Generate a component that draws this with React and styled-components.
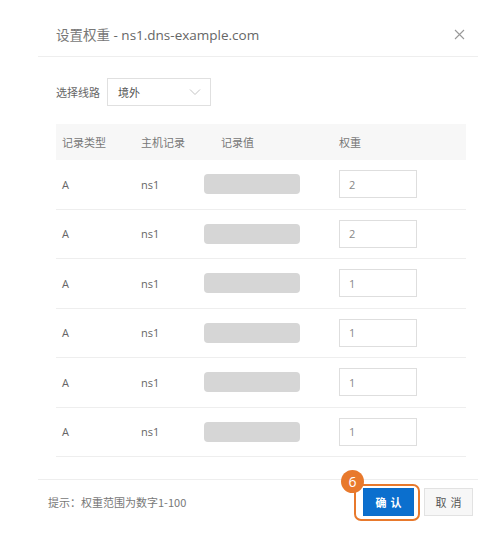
import React from "react";
import styled, { createGlobalStyle } from "styled-components";

const Global = createGlobalStyle`
  html, body { margin: 0; padding: 0; background: #fff; }
  body { font-family: "Open Sans", "Noto Sans CJK SC", sans-serif; }
  * { box-sizing: border-box; }
`;

const Dialog = styled.div`
  width: 440px;
  margin-left: 38px;
  background: #fff;
`;

const Header = styled.div`
  height: 57px;
  display: flex;
  align-items: center;
  justify-content: space-between;
  padding: 12px 12px 0 18px;
  border-bottom: 1px solid #eeeeee;
`;

const Title = styled.div`
  font-size: 13.5px;
  color: #666;
`;

const TitleCjk = styled.span`
  font-family: "Noto Sans CJK SC", sans-serif;
  font-size: 13.5px;
  color: #777;
`;

const Close = styled.button`
  border: 0;
  background: none;
  padding: 0;
  width: 14px;
  height: 14px;
  display: flex;
  align-items: center;
  justify-content: center;
  cursor: pointer;
`;

const Body = styled.div`
  padding: 21px 12px 0 18px;
`;

const FilterRow = styled.div`
  display: flex;
  align-items: center;
  gap: 7px;
  height: 28px;
`;

const Label = styled.span`
  font-family: "Noto Sans CJK SC", sans-serif;
  font-size: 11px;
  color: #666;
`;

const Select = styled.div`
  width: 104px;
  height: 28px;
  border: 1px solid #e0e0e0;
  display: flex;
  align-items: center;
  justify-content: space-between;
  padding: 0 9px 0 10px;
  font-family: "Noto Sans CJK SC", sans-serif;
  font-size: 11px;
  color: #555;
`;

const Table = styled.div`
  margin-top: 18px;
`;

const Row = styled.div`
  display: grid;
  grid-template-columns: 79px 68px 130px 1fr;
  align-items: center;
  height: ${(p) => (p.$head ? "36px" : "49.5px")};
  background: ${(p) => (p.$head ? "#f7f7f7" : "#fff")};
  border-bottom: ${(p) => (p.$head ? "none" : "1px solid #eeeeee")};
`;

const Cell = styled.div`
  padding-left: ${(p) => p.$pl ?? 6}px;
  font-family: "Open Sans", "Noto Sans CJK SC", sans-serif;
  font-size: 11px;
  color: ${(p) => (p.$head ? "#777" : "#666")};
`;

const Redacted = styled.div`
  width: 96px;
  height: 20px;
  border-radius: 4px;
  background: #d6d6d6;
`;

const WeightInput = styled.input`
  width: 78px;
  height: 28px;
  border: 1px solid #dedede;
  padding: 0 9px;
  font-family: "Open Sans", sans-serif;
  font-size: 11px;
  color: #888;
  outline: none;
`;

const Footer = styled.div`
  margin-top: 22px;
  border-top: 1px solid #eeeeee;
  display: flex;
  align-items: center;
  justify-content: space-between;
  padding: 8px 5px 8px 10px;
`;

const Hint = styled.span`
  font-family: "Noto Sans CJK SC", sans-serif;
  font-size: 11px;
  color: #777;
`;

const Actions = styled.div`
  display: flex;
  gap: 10px;
`;

const Btn = styled.button`
  position: relative;
  width: ${(p) => (p.$primary ? "51px" : "49px")};
  height: 28px;
  border: 1px solid ${(p) => (p.$primary ? "#0b6cc9" : "#e2e2e2")};
  background: ${(p) => (p.$primary ? "#0b6fce" : "#f7f7f7")};
  color: ${(p) => (p.$primary ? "#fff" : "#555")};
  font-family: "Noto Sans CJK SC", sans-serif;
  font-size: 11px;
  font-weight: ${(p) => (p.$primary ? 700 : 400)};
  letter-spacing: 4px;
  padding: 0 0 0 4px;
  cursor: pointer;
`;

const Ring = styled.span`
  position: absolute;
  left: -10px;
  right: -7px;
  top: -5px;
  bottom: -6px;
  border: 2.5px solid #e8792c;
  border-radius: 7px;
  pointer-events: none;
`;

const Badge = styled.span`
  position: absolute;
  left: -23px;
  top: -19px;
  width: 23px;
  height: 23px;
  border-radius: 50%;
  background: #e8792c;
  color: #fff;
  font-family: "Open Sans", sans-serif;
  font-size: 14px;
  font-weight: 400;
  letter-spacing: 0;
  display: flex;
  align-items: center;
  justify-content: center;
`;

const rows = ["2", "2", "1", "1", "1", "1"];

export default function App() {
  return (
    <>
      <Global />
      <Dialog>
        <Header>
          <Title>
            <TitleCjk>设置权重</TitleCjk> - ns1.dns-example.com
          </Title>
          <Close aria-label="close">
            <svg width="11" height="11" viewBox="0 0 11 11">
              <path d="M1 1L10 10M10 1L1 10" stroke="#999" strokeWidth="1.1" fill="none" />
            </svg>
          </Close>
        </Header>
        <Body>
          <FilterRow>
            <Label>选择线路</Label>
            <Select>
              <span>境外</span>
              <svg width="12" height="8" viewBox="0 0 12 8">
                <path d="M1 1.5L6 6.5L11 1.5" stroke="#c4c4c4" strokeWidth="1" fill="none" />
              </svg>
            </Select>
          </FilterRow>
          <Table>
            <Row $head>
              <Cell $head>记录类型</Cell>
              <Cell $head>主机记录</Cell>
              <Cell $head $pl={18}>记录值</Cell>
              <Cell $head>权重</Cell>
            </Row>
            {rows.map((w, i) => (
              <Row key={i}>
                <Cell>A</Cell>
                <Cell>ns1</Cell>
                <Cell $pl={1}>
                  <Redacted />
                </Cell>
                <Cell>
                  <WeightInput defaultValue={w} />
                </Cell>
              </Row>
            ))}
          </Table>
        </Body>
        <Footer>
          <Hint>提示：权重范围为数字1-100</Hint>
          <Actions>
            <Btn $primary>
              确认
              <Ring />
              <Badge>6</Badge>
            </Btn>
            <Btn>取消</Btn>
          </Actions>
        </Footer>
      </Dialog>
    </>
  );
}
